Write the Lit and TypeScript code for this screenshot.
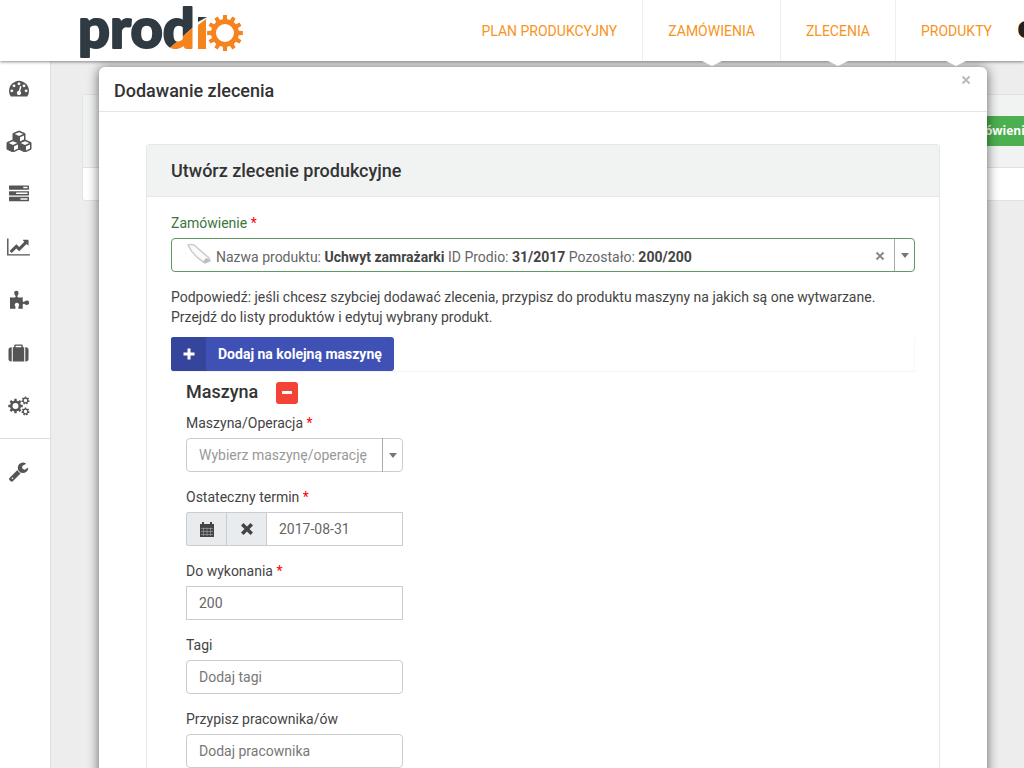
import { LitElement, html, css, svg } from "lit";
import { customElement, property } from "lit/decorators.js";

/** Outline of a toothed wheel centred on (cx, cy), with a round hole. */
function gear(cx: number, cy: number, outer: number, inner: number, hole: number, teeth: number): string {
  const step = (Math.PI * 2) / teeth;
  const at = (r: number, a: number) => `${(cx + r * Math.sin(a)).toFixed(2)} ${(cy - r * Math.cos(a)).toFixed(2)}`;
  const pts: string[] = [];
  for (let i = 0; i < teeth; i++) {
    const a = i * step;
    pts.push(at(inner, a - step * 0.3), at(outer, a - step * 0.2), at(outer, a + step * 0.2), at(inner, a + step * 0.3));
  }
  return `M${pts.join("L")}ZM${cx - hole} ${cy}a${hole} ${hole} 0 1 0 ${hole * 2} 0a${hole} ${hole} 0 1 0 ${-hole * 2} 0Z`;
}

/** Isometric cube: solid left side, outlined top and right side. */
const cube = (x: number, y: number) => svg`<g transform="translate(${x} ${y})">
  <path d="M6 0 12 2.6V9.200L6 12 0 9.200V2.600Z" fill="currentColor" stroke="currentColor" stroke-width="1" stroke-linejoin="round"/>
  <path d="M6 1.200 10.300 3 6 4.900 1.700 3Z" fill="#fff"/>
  <path d="M7 6.200 11 4.400V8.500L7 10.500Z" fill="#fff"/></g>`;

const icons: Record<string, { box: string; w: number; h: number; art: unknown }> = {
  gauge: { box: "0 0 1792 1792", w: 20, h: 20, art: svg`<path d="M384 1152q0-53-37.500-90.500t-90.500-37.500-90.500 37.500-37.500 90.500 37.500 90.500 90.500 37.500 90.500-37.500 37.500-90.500zm192-448q0-53-37.500-90.500t-90.500-37.500-90.500 37.500-37.500 90.500 37.500 90.500 90.500 37.500 90.500-37.500 37.500-90.500zm428 481l101-382q6-26-7.500-48.500t-38.500-29.500-48 6.500-30 39.500l-101 382q-60 5-107 43.500t-63 98.500q-20 77 20 146t117 89 146-20 89-117q16-60-6-117t-72-91zm660-33q0-53-37.500-90.500t-90.500-37.500-90.500 37.500-37.500 90.500 37.500 90.500 90.500 37.500 90.500-37.500 37.500-90.500zm-640-640q0-53-37.500-90.500t-90.500-37.500-90.500 37.500-37.500 90.500 37.500 90.500 90.500 37.500 90.500-37.500 37.500-90.500zm448 192q0-53-37.500-90.500t-90.500-37.500-90.500 37.500-37.500 90.500 37.500 90.500 90.500 37.500 90.500-37.500 37.500-90.500zm320 448q0 261-141 483-19 29-54 29h-1402q-35 0-54-29-141-221-141-483 0-182 71-348t191-286 286-191 348-71 348 71 286 191 191 286 71 348z"/>` },
  cubes: { box: "-1 -1 26 22", w: 26, h: 22, art: svg`${cube(6, 0)}${cube(0, 9)}${cube(12, 9)}` },
  tasks: { box: "0 0 1792 1792", w: 20, h: 20, art: svg`<path d="M1024 1408h640v-128h-640v128zm-384-512h1024v-128h-1024v128zm640-512h384v-128h-384v128zm512 832v256q0 26-19 45t-45 19h-1664q-26 0-45-19t-19-45v-256q0-26 19-45t45-19h1664q26 0 45 19t19 45zm0-512v256q0 26-19 45t-45 19h-1664q-26 0-45-19t-19-45v-256q0-26 19-45t45-19h1664q26 0 45 19t19 45zm0-512v256q0 26-19 45t-45 19h-1664q-26 0-45-19t-19-45v-256q0-26 19-45t45-19h1664q26 0 45 19t19 45z"/>` },
  chart: { box: "0 0 2048 1792", w: 23, h: 20, art: svg`<path d="M2048 1536v128h-2048v-1536h128v1408h1920zm-128-1248v435q0 21-19.500 29.500t-35.500-7.500l-121-121-633 633q-10 10-23 10t-23-10l-233-233-416 416-192-192 585-585q10-10 23-10t23 10l233 233 464-464-121-121q-16-16-7.500-35.500t29.500-19.500h435q14 0 23 9t9 23z"/>` },
  puzzle: { box: "0 0 20 20", w: 20, h: 20, art: svg`<path d="M1 7.200c2 .500 3.800.500 5.200.100.700-.300.600-.900.200-1.600C5.800 4.600 5.200 3.800 5.200 3A2.200 2.200 0 0 1 9.600 3c0 .800-.500 1.600-1 2.700-.300.700-.300 1.300.300 1.500 1.600.500 3.300.300 5 .100-.200 1.400-.400 2.900 0 4.100.300.600.900.600 1.600.200.900-.500 1.600-1 2.500-1a2.100 2.100 0 0 1 0 4.300c-.900 0-1.600-.500-2.500-1-.700-.300-1.300-.200-1.600.400-.300 1.400-.200 3 0 4.500H9.500c-.300-1-.200-1.900.300-2.800.500-.800.400-1.800-.300-2.500a2.300 2.300 0 0 0-3.300.1c-.600.700-.600 1.600-.100 2.400.500.900.600 1.800.200 2.800H1Z"/>` },
  suitcase: { box: "0 0 1792 1792", w: 21, h: 20, art: svg`<path d="M640 384h512v-128h-512v128zm-352 0v1280h-64q-92 0-158-66t-66-158v-832q0-92 66-158t158-66h64zm1120 0v1280h-1024v-1280h128v-160q0-40 28-68t68-28h576q40 0 68 28t28 68v160h128zm384 224v832q0 92-66 158t-158 66h-64v-1280h64q92 0 158 66t66 158z"/>` },
  cogs: { box: "0 0 22 20", w: 22, h: 20, art: svg`<path fill-rule="evenodd" d="${gear(7.5, 10, 7.3, 5.500, 3, 8)}${gear(17.5, 4.500, 4.100, 3, 1.700, 7)}${gear(17.5, 15.500, 4.100, 3, 1.700, 7)}"/>` },
  wrench: { box: "0 0 1792 1792", w: 21, h: 21, art: svg`<path d="M448 1472q0-26-19-45t-45-19-45 19-19 45 19 45 45 19 45-19 19-45zm644-420l-682 682q-37 37-90 37-52 0-91-37l-106-108q-38-36-38-90 0-53 38-91l681-681q39 98 114.500 173.500t173.500 114.500zm634-435q0 39-23 106-47 134-164.500 217.500t-258.500 83.500q-185 0-316.500-131.500t-131.500-316.500 131.500-316.500 316.500-131.500q58 0 121.500 16.500t107.500 46.500q16 11 16 28t-16 28l-293 169v224l193 107q5-3 79-48.500t135.500-81 70.500-35.500q15 0 23.500 10t8.500 25z"/>` },
  plus: { box: "0 0 12 12", w: 12, h: 12, art: svg`<path d="M4.500.500h3V4.500h4v3h-4v4h-3v-4h-4v-3h4Z"/>` },
  minus: { box: "0 0 12 12", w: 12, h: 12, art: svg`<rect x="1" y="4" width="10" height="3" rx="0.500"/>` },
  times: { box: "0 0 14 14", w: 14, h: 14, art: svg`<path d="M3.500 1 7 4.500 10.500 1 13 3.500 9.500 7 13 10.500 10.500 13 7 9.500 3.500 13 1 10.500 4.500 7 1 3.500Z"/>` },
  close: { box: "0 0 10 10", w: 10, h: 10, art: svg`<path d="M1.500 1.500 8.500 8.500M8.500 1.500 1.500 8.500" stroke="currentColor" stroke-width="2"/>` },
  caret: { box: "0 0 8 5", w: 8, h: 5, art: svg`<path d="M0 0h8L4 5Z"/>` },
  calendar: { box: "0 0 14 15", w: 14, h: 15, art: svg`<path d="M0 2h2V0h2v2h6V0h2v2h2v3H0Z"/><path d="M0 5h14v10H0Z"/><path d="M1 6.500H13M1 9.500H13M1 12.500H13M3.500 5.500V14M7 5.500V14M10.500 5.500V14" stroke="#a4a8aa" stroke-width="0.600"/>` },
};

@customElement("ui-icon")
class UiIcon extends LitElement {
  static styles = css`
    :host { display: inline-flex; }
    svg { display: block; fill: currentColor; }
  `;
  @property() name = "plus";
  render() {
    const i = icons[this.name];
    return html`<svg aria-hidden="true" width=${i.w} height=${i.h} viewBox=${i.box}>${i.art}</svg>`;
  }
}

@customElement("prodio-logo")
class ProdioLogo extends LitElement {
  static styles = css`
    :host { display: block; }
    svg { display: block; }
    .word { font: 900 56px Lato, sans-serif; stroke-width: 2px; stroke-linejoin: round; }
    .dark { fill: #2f3a42; }
    .orange { fill: #f5841f; }
    .word.dark { stroke: #2f3a42; }
    .word.orange { stroke: #f5841f; }
  `;
  render() {
    return html`<svg width="168" height="61" viewBox="0 0 168 61" role="img" aria-label="prodio">
      <defs><clipPath id="upper"><path d="M0 0H120V21L82 55V61H0Z"/></clipPath>
      <clipPath id="lower"><path d="M120 21V61H82V55Z"/></clipPath></defs>
      <g clip-path="url(#upper)"><text class="word dark" x="-2" y="48">prod</text></g>
      <g clip-path="url(#lower)" aria-hidden="true"><text class="word orange" x="-2" y="48">prod</text></g>
      <path class="dark" d="M118 17H127L118 22Z"/>
      <path class="orange" d="M118 25 126 19V49H118Z"/>
      <path class="orange" fill-rule="evenodd" d="${gear(145, 33, 18, 14, 9, 12)}"/>
    </svg>`;
  }
}

@customElement("app-root")
class AppRoot extends LitElement {
  static styles = css`
    :host {
      display: flex; flex-direction: column; height: 100vh; overflow: hidden;
      font: 14px/20px Roboto, sans-serif; color: #444; background: #ededed;
    }
    * { box-sizing: border-box; }
    button, input, select { font: inherit; color: inherit; margin: 0; }
    button { border: 0; padding: 0; background: none; display: flex; align-items: center; justify-content: center; cursor: pointer; }
    a { color: inherit; text-decoration: none; }

    .top { position: relative; z-index: 3; flex: none; display: flex; height: 61px; padding-left: 80px; background: #fff; box-shadow: 0 1px 3px rgba(0, 0, 0, 0.45); }
    .nav { display: flex; margin-left: auto; }
    .nav-link { position: relative; display: flex; align-items: center; padding: 0 25px; color: #f7941d; font-size: 14px; border-left: 1px solid #eee; white-space: nowrap; }
    .nav-link.first { border-left: 0; }
    .nav-link.drop::after { content: ""; position: absolute; top: 100%; left: 50%; margin-left: -10px; border: 10px solid transparent; border-top: 5px solid #fff; border-bottom: 0; }
    .partner { width: 7px; padding-bottom: 8px; overflow: hidden; display: flex; align-items: center; color: #222; font: 800 30px/52px "Open Sans", sans-serif; }

    .below { position: relative; flex: 1; min-height: 0; display: flex; }
    .side { flex: none; width: 51px; background: #fff; border-right: 1px solid #ddd; color: #555; }
    .side-link { display: flex; align-items: center; height: 53px; padding-left: 8px; }
    .side-icon { width: 21px; display: flex; justify-content: center; }
    .side-link.last { height: 66px; border-top: 1px solid #ddd; margin-top: 6px; }
    .back { flex: 1; min-width: 0; padding: 33px 0 0 31px; overflow: hidden; }
    .list { margin-right: -80px; border: 1px solid #e2e2e2; border-radius: 3px; background: #fff; }
    .list-head { display: flex; justify-content: flex-end; align-items: center; height: 73px; padding-right: 59px; background: #f1f3f3; border-bottom: 1px solid #e2e2e2; }
    .list-body { height: 32px; }
    .add-order { height: 30px; padding: 0 12px; background: #4caf50; color: #fff; font: 700 12px/30px "Open Sans", sans-serif; }

    .modal { position: absolute; z-index: 2; top: 6px; left: 99px; right: 37px; bottom: -40px; display: flex; flex-direction: column; background: #fff; border-radius: 6px 6px 0 0; box-shadow: 0 1px 12px rgba(0, 0, 0, 0.6); }
    .modal-head { flex: none; display: flex; justify-content: space-between; height: 45px; padding: 0 15px; border-bottom: 1px solid #e5e5e5; }
    .modal-title { margin: 0; font-size: 18px; line-height: 48px; font-weight: 500; color: #333; }
    .modal-close { align-self: flex-start; width: 12px; height: 26px; color: #bbb; }
    .modal-body { flex: 1; min-height: 0; padding: 32px 47px 0; overflow: hidden; }
    .card { border: 1px solid #e7e7e7; border-radius: 3px; }
    .card-title { margin: 0; padding: 0 24px; font-size: 18px; line-height: 51px; font-weight: 500; color: #333; background: #f1f3f3; border-bottom: 1px solid #e7e7e7; }
    .form { padding: 16px 24px; }

    .label { display: block; height: 20px; margin-bottom: 5px; }
    .label.ok { color: #3c763d; }
    .req { color: #f00; }
    .order { display: flex; height: 34px; border: 1px solid #5f9a62; border-radius: 4px; }
    .order-pick { flex: 1; display: grid; min-width: 0; }
    .order-pick > * { grid-area: 1 / 1; }
    .order-select { opacity: 0; width: 100%; }
    .order-value { display: flex; align-items: center; gap: 4px; padding: 4px 14px 0; color: #666; white-space: nowrap; pointer-events: none; }
    .order-value b { font-weight: 700; color: #444; }
    .thumb { width: 26px; height: 24px; margin-top: -6px; }
    .clear { width: 28px; padding-top: 2px; color: #888; }
    .open { width: 20px; color: #777; border-left: 1px solid #aaa; }
    .hint { margin: 15px 0 10px; color: #444; }

    .add-machine { height: 34px; background: #3f51b5; color: #fff; font-weight: 700; border-radius: 3px; overflow: hidden; }
    .add-plus { display: flex; align-items: center; justify-content: center; width: 35px; height: 34px; background: #35459c; }
    .add-text { padding: 0 12px; }
    .strip { border-bottom: 1px solid #f3f3f3; border-right: 1px solid #f9f9f9; }
    .machine { width: 247px; padding: 9px 15px 0; }
    .machine-head { display: flex; align-items: flex-end; gap: 18px; height: 23px; margin-bottom: 9px; }
    .machine-title { margin: 0; font-size: 18px; line-height: 24px; font-weight: 500; color: #333; }
    .remove { width: 22px; height: 22px; background: #f44336; color: #fff; border-radius: 3px; }
    .field { margin-bottom: 15px; }
    .input { display: block; width: 100%; height: 34px; padding: 0 12px; border: 1px solid #ccc; border-radius: 0; background: #fff; color: #666; outline: 0; }
    .input.round { border-radius: 4px; }
    .input::placeholder { color: #777; opacity: 1; }
    .select-wrap { display: grid; grid-template-columns: 1fr 21px; }
    .select { appearance: none; grid-area: 1 / 1 / 2 / 3; color: #999; border-radius: 4px; }
    .select-arrow { grid-area: 1 / 2; display: flex; align-items: center; justify-content: center; border-left: 1px solid #aaa; color: #777; pointer-events: none; }
    .group { display: flex; }
    .group .input { flex: 1; min-width: 0; }
    .addon { flex: none; width: 40px; height: 34px; background: #e9ecee; border: 1px solid #ccc; border-right: 0; }
    .addon.first { border-radius: 3px 0 0 3px; }
  `;

  private side = ["gauge", "cubes", "tasks", "chart", "puzzle", "suitcase", "cogs"];
  private sideNames = ["Pulpit", "Magazyn", "Zadania", "Raporty", "Operacje", "Klienci", "Maszyny"];

  render() {
    const req = html`<span class="req">*</span>`;
    return html`
      <header class="top">
        <prodio-logo></prodio-logo>
        <nav class="nav">
          <a class="nav-link first" href="#">PLAN PRODUKCYJNY</a>
          <a class="nav-link drop" href="#">ZAMÓWIENIA</a>
          <a class="nav-link drop" href="#">ZLECENIA</a>
          <a class="nav-link drop" href="#">PRODUKTY</a>
          <span class="partner">e</span>
        </nav>
      </header>
      <div class="below">
        <nav class="side">
          ${this.side.map((n, i) => html`<a class="side-link" href="#" aria-label=${this.sideNames[i]}><span class="side-icon"><ui-icon name=${n}></ui-icon></span></a>`)}
          <a class="side-link last" href="#" aria-label="Ustawienia"><span class="side-icon"><ui-icon name="wrench"></ui-icon></span></a>
        </nav>
        <main class="back">
          <section class="list">
            <div class="list-head"><button class="add-order">Dodaj zamówienie</button></div>
            <div class="list-body"></div>
          </section>
        </main>
        <section class="modal" role="dialog" aria-labelledby="title">
          <header class="modal-head">
            <h1 class="modal-title" id="title">Dodawanie zlecenia</h1>
            <button class="modal-close" aria-label="Zamknij"><ui-icon name="close"></ui-icon></button>
          </header>
          <div class="modal-body">
            <div class="card">
              <h2 class="card-title">Utwórz zlecenie produkcyjne</h2>
              <form class="form">
                <label class="label ok" for="order">Zamówienie ${req}</label>
                <div class="order">
                  <div class="order-pick">
                    <select class="order-select" id="order"><option>31/2017</option></select>
                    <span class="order-value">
                      <svg class="thumb" viewBox="0 0 26 24" aria-hidden="true"><path d="M2 3Q3 2 8 3L23 16 24 19 19 21Q7 14 2 3Z" fill="#fafafa" stroke="#ccc" stroke-width="1.500"/><path d="M17 20 20 16 24 18 20 21Z" fill="#bbb"/></svg>
                      <span>Nazwa produktu: <b>Uchwyt zamrażarki</b> ID Prodio: <b>31/2017</b> Pozostało: <b>200/200</b></span>
                    </span>
                  </div>
                  <button class="clear" type="button" aria-label="Wyczyść"><ui-icon name="close"></ui-icon></button>
                  <button class="open" type="button" aria-label="Rozwiń"><ui-icon name="caret"></ui-icon></button>
                </div>
                <p class="hint">Podpowiedź: jeśli chcesz szybciej dodawać zlecenia, przypisz do produktu maszyny na jakich są one wytwarzane.<br>Przejdź do listy produktów i edytuj wybrany produkt.</p>
                <div class="strip">
                  <button class="add-machine" type="button"><span class="add-plus"><ui-icon name="plus"></ui-icon></span><span class="add-text">Dodaj na kolejną maszynę</span></button>
                </div>
                <div class="machine">
                  <div class="machine-head">
                    <h3 class="machine-title">Maszyna</h3>
                    <button class="remove" type="button" aria-label="Usuń maszynę"><ui-icon name="minus"></ui-icon></button>
                  </div>
                  <div class="field">
                    <label class="label" for="machine">Maszyna/Operacja ${req}</label>
                    <div class="select-wrap">
                      <select class="input select" id="machine"><option>Wybierz maszynę/operację</option></select>
                      <span class="select-arrow"><ui-icon name="caret"></ui-icon></span>
                    </div>
                  </div>
                  <div class="field">
                    <label class="label" for="date">Ostateczny termin ${req}</label>
                    <div class="group">
                      <button class="addon first" type="button" aria-label="Kalendarz"><ui-icon name="calendar"></ui-icon></button>
                      <button class="addon" type="button" aria-label="Usuń datę"><ui-icon name="times"></ui-icon></button>
                      <input class="input" id="date" type="text" .value=${"2017-08-31"}>
                    </div>
                  </div>
                  <div class="field">
                    <label class="label" for="amount">Do wykonania ${req}</label>
                    <input class="input" id="amount" type="text" .value=${"200"}>
                  </div>
                  <div class="field">
                    <label class="label" for="tags">Tagi</label>
                    <input class="input round" id="tags" type="text" placeholder="Dodaj tagi">
                  </div>
                  <div class="field">
                    <label class="label" for="worker">Przypisz pracownika/ów</label>
                    <input class="input round" id="worker" type="text" placeholder="Dodaj pracownika">
                  </div>
                </div>
              </form>
            </div>
          </div>
        </section>
      </div>
    `;
  }
}
